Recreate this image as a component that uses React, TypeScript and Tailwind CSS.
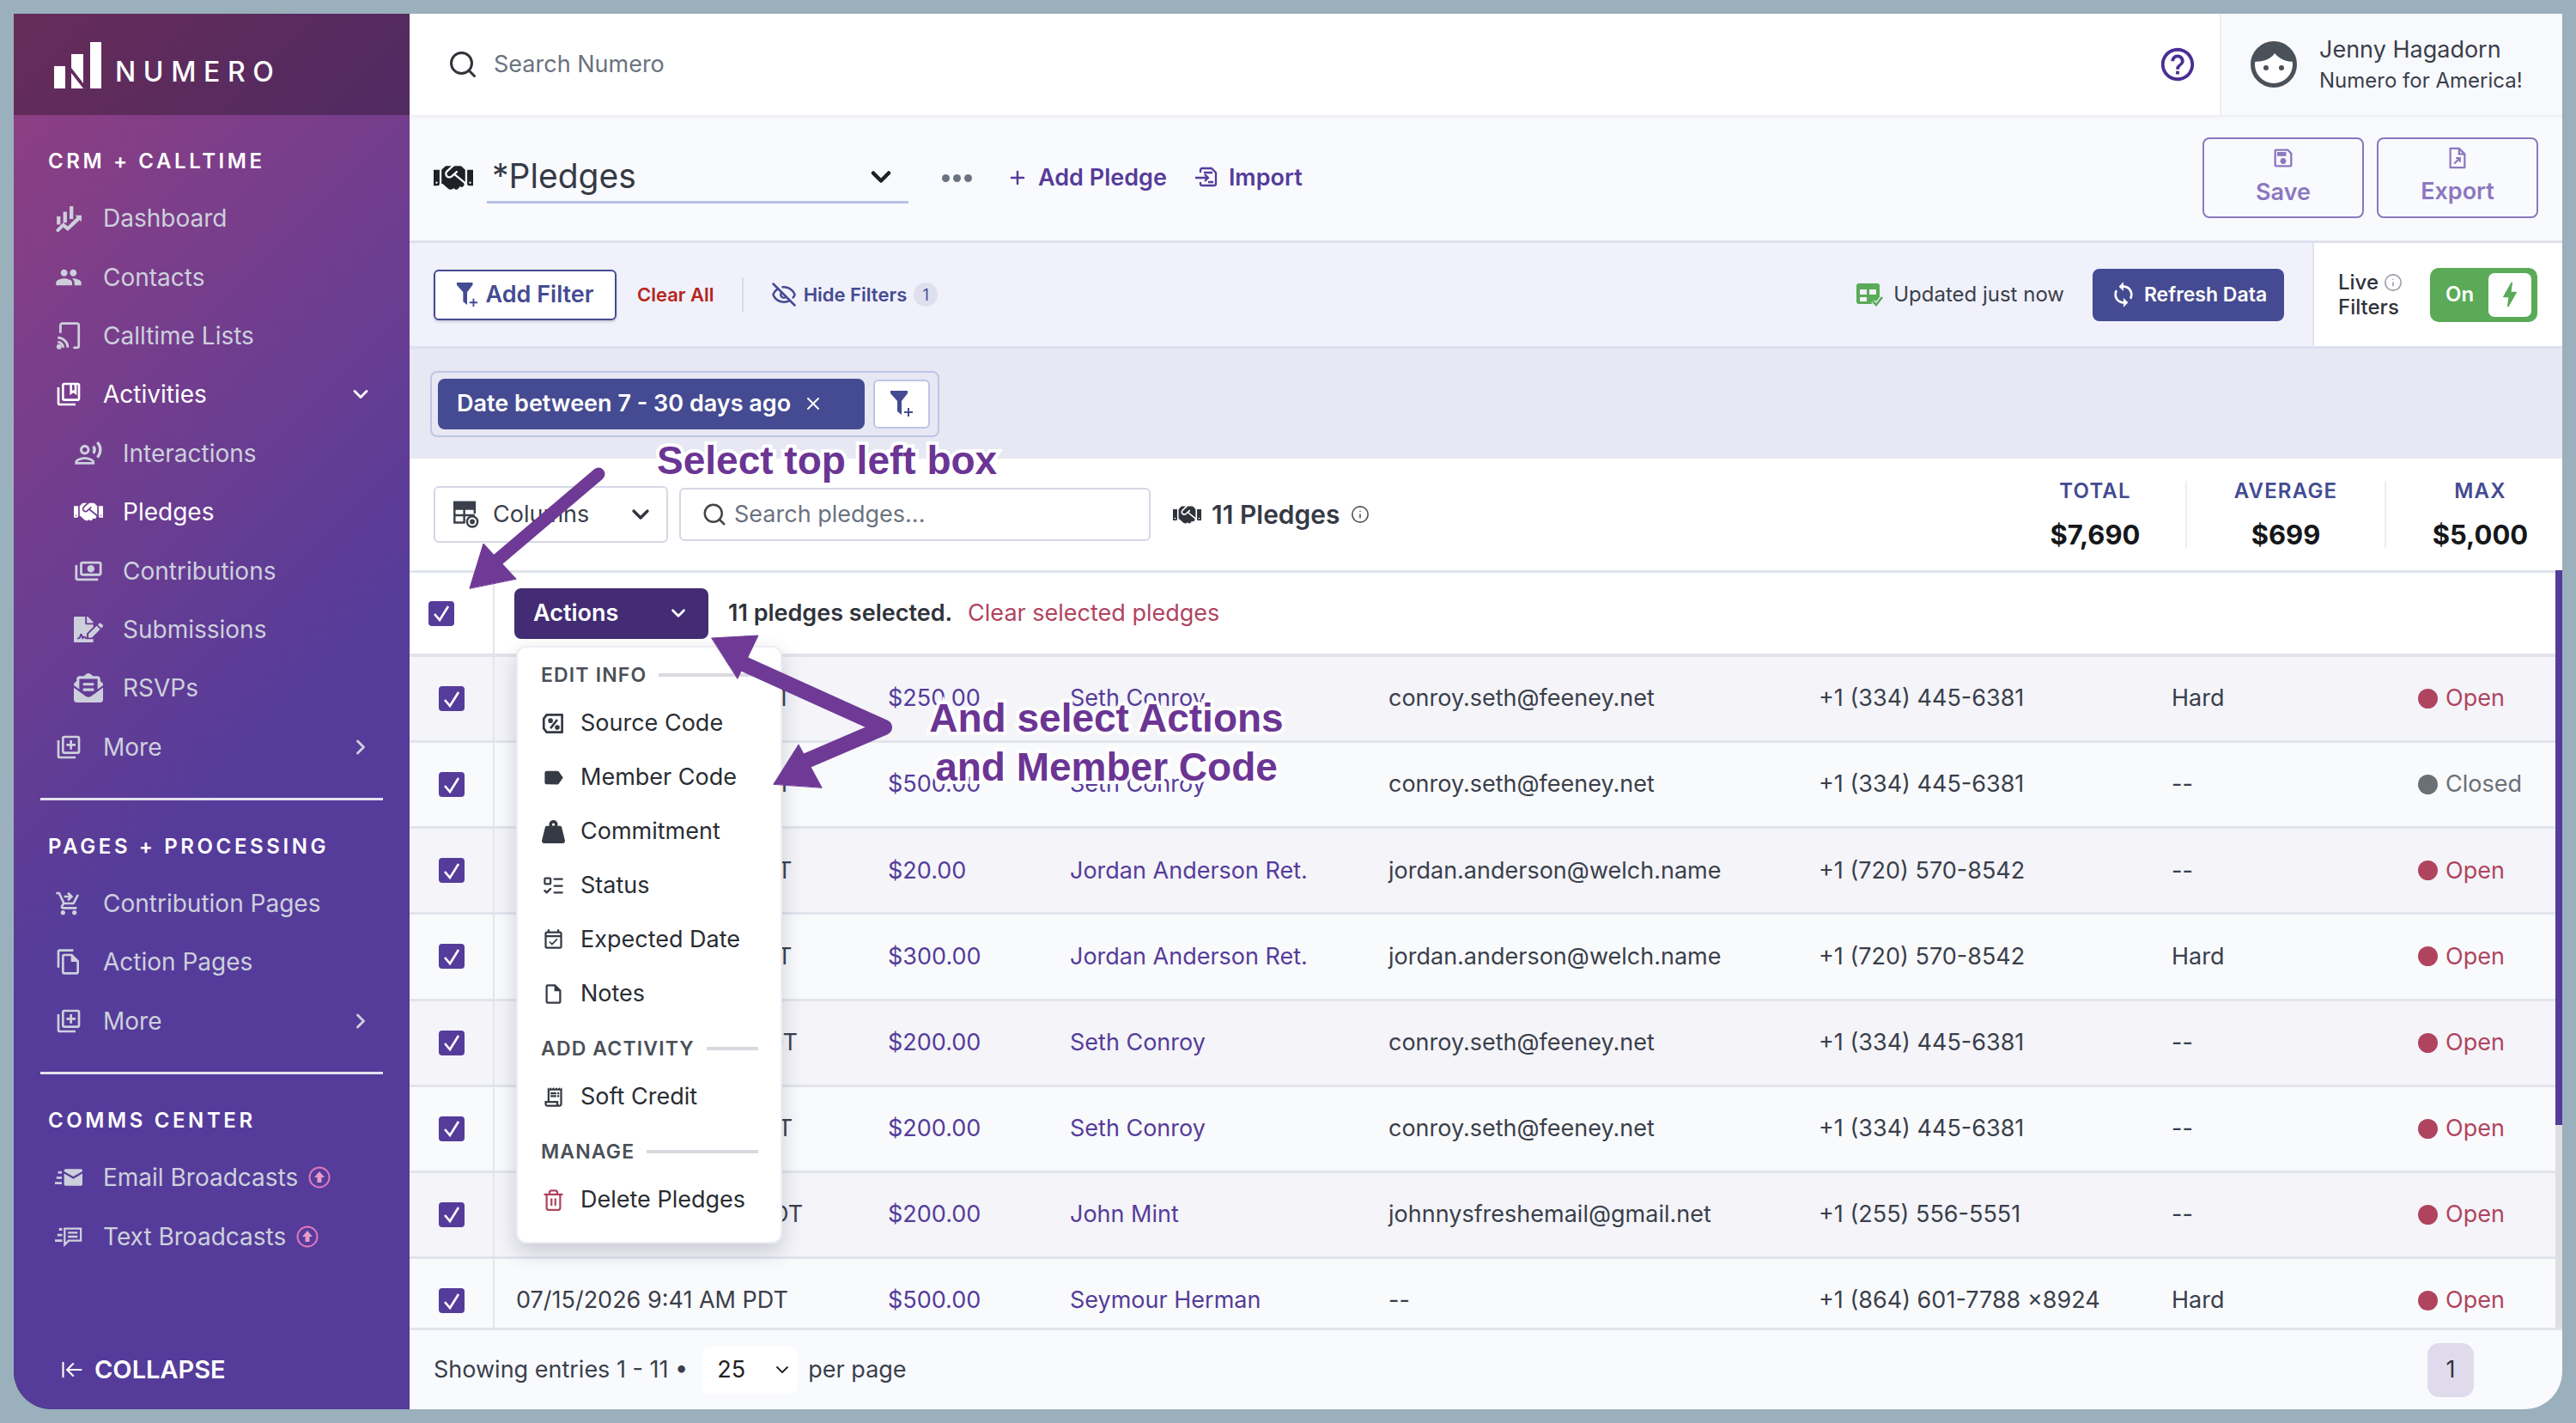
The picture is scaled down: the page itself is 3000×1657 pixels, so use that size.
import React from "react"
import { ArrowLeftToLine, ChevronDown, ChevronRight, EyeOff, Info, ListTodo, Plus, Search, Trash2, X } from "lucide-react"
import { FaEnvelopeOpenText, FaFileSignature, FaHandshake, FaWeightHanging } from "react-icons/fa"
import {
  MdBolt,
  MdHelpOutline,
  MdLabel,
  MdOutlineCollectionsBookmark,
  MdOutlineEventAvailable,
  MdOutlineFileCopy,
  MdOutlineInsertDriveFile,
  MdOutlineLibraryAdd,
  MdOutlinePayments,
  MdOutlineReceiptLong,
  MdOutlineRecordVoiceOver,
  MdOutlineSave,
  MdPeople,
  MdShoppingCartCheckout,
  MdSync,
} from "react-icons/md"

type IconProps = { className?: string }

// Hand drawn icons that the packages don't have
const NumeroMark = () => (
  <svg viewBox="0 0 55 54" className="h-[54px] w-[55px] fill-white">
    <rect x="0" y="28" width="13" height="26" />
    <path d="M20 14h14v34L20 30z" />
    <path d="M20 36l14 18H20z" />
    <rect x="42" y="0" width="13" height="54" />
  </svg>
)

const DashboardIcon = ({ className }: IconProps) => (
  <svg viewBox="0 0 30 30" className={className} fill="currentColor">
    <rect x="2" y="13" width="4" height="9" />
    <rect x="9" y="8" width="4" height="12" />
    <rect x="16" y="2" width="4" height="14" />
    <path d="M1 28l8-8 5 4 10-10-2-2h7v7l-2-2-13 12-5-4-6 6z" />
  </svg>
)

const CastIcon = ({ className }: IconProps) => (
  <svg viewBox="0 0 26 30" className={className} fill="none" stroke="currentColor" strokeWidth="2.6">
    <path d="M4 12V3.5a2 2 0 0 1 2-2h16a2 2 0 0 1 2 2V26a2 2 0 0 1-2 2h-4" />
    <path d="M1 17c6 0 11 5 11 11M1 22c3.500 0 6 2.500 6 6" />
    <circle cx="2.500" cy="27" r="1.500" fill="currentColor" />
  </svg>
)

const EmailBlastIcon = ({ className }: IconProps) => (
  <svg viewBox="0 0 36 22" className={className} fill="currentColor">
    <path d="M12 2a2 2 0 0 1 2-2h20a2 2 0 0 1 2 2v1L24 10 12 3zM12 6l12 7 12-7v14a2 2 0 0 1-2 2H14a2 2 0 0 1-2-2z" />
    <rect x="4" y="3" width="5" height="3" />
    <rect x="2" y="10" width="7" height="3" />
    <rect x="0" y="17" width="9" height="3" />
  </svg>
)

const TextBlastIcon = ({ className }: IconProps) => (
  <svg viewBox="0 0 34 26" className={className} fill="none" stroke="currentColor" strokeWidth="2.400">
    <path d="M12 3h20v15H17l-5 5z" />
    <path d="M16 8h12M16 13h12" />
    <path d="M5 4h4M3 11h6M0 18h9" strokeWidth="3" />
  </svg>
)

const UpgradeBadge = () => (
  <svg viewBox="0 0 26 26" className="h-[26px] w-[26px] shrink-0" fill="none">
    <circle cx="13" cy="13" r="11.500" stroke="#e376bd" strokeWidth="2" />
    <path d="M13 6l6 7h-3.500v6h-5v-6H7z" fill="#e79acb" />
  </svg>
)

const FilterPlus = ({ className }: IconProps) => (
  <svg viewBox="0 0 28 32" className={className} fill="currentColor">
    <path d="M1 1h20v3l-7 9v16l-5-4V13L1 4z" />
    <path d="M21 21h2v4h4v2h-4v4h-2v-4h-4v-2h4z" />
  </svg>
)

const ColumnsIcon = ({ className }: IconProps) => (
  <svg viewBox="0 0 32 34" className={className} fill="none" stroke="currentColor" strokeWidth="2.600">
    <path d="M15 27H2V2h25v14" />
    <path d="M2 2h25v8H2z" fill="currentColor" />
    <path d="M14 10v17M2 18h25" />
    <circle cx="24" cy="26" r="6.500" fill="#fff" />
    <circle cx="24" cy="26" r="1.800" fill="currentColor" />
  </svg>
)

const ImportIcon = ({ className }: IconProps) => (
  <svg viewBox="0 0 28 28" className={className} fill="none" stroke="currentColor" strokeWidth="2.300">
    <path d="M7 8V5a2 2 0 0 1 2-2h11l5 5v13a2 2 0 0 1-2 2H9a2 2 0 0 1-2-2v-2" strokeLinejoin="round" />
    <path d="M1 14h15M12 10l4 4-4 4" />
    <path d="M11 8h10M16 19h6" />
  </svg>
)

const ExportIcon = ({ className }: IconProps) => (
  <svg viewBox="0 0 22 28" className={className} fill="none" stroke="currentColor" strokeWidth="2.400">
    <path d="M2 2h11l7 7v17H2z" strokeLinejoin="round" />
    <path d="M13 2v7h7" />
    <path d="M7 21l7-7M9 14h5v5" />
  </svg>
)

const TableCheckIcon = ({ className }: IconProps) => (
  <svg viewBox="0 0 32 28" className={className} fill="none">
    <rect x="1" y="1" width="27" height="24" rx="3" fill="#5aaa57" />
    <path d="M5 8h8v6H5zM16 8h8v6h-8zM5 17h8v5H5z" fill="#f0f1fa" />
    <path d="M20 22l4 4 7-9" stroke="#f0f1fa" strokeWidth="5" />
    <path d="M20 22l4 4 7-9" stroke="#5aaa57" strokeWidth="2.500" />
  </svg>
)

const PercentBox = ({ className }: IconProps) => (
  <svg viewBox="0 0 24 24" className={className} fill="none" stroke="currentColor" strokeWidth="2.400">
    <path d="M5 3h16v18H5l-3-4V7z" strokeLinejoin="round" />
    <path d="M16 8l-7 9" />
    <circle cx="9" cy="9" r="1.300" fill="currentColor" />
    <circle cx="16" cy="16" r="1.300" fill="currentColor" />
  </svg>
)

const Avatar = () => (
  <svg viewBox="0 0 54 54" className="h-[54px] w-[54px]">
    <circle cx="27" cy="27" r="24.500" fill="#fff" stroke="#4b5158" strokeWidth="5" />
    <path d="M3 24C5 9 15 2 27 2s22 7 24 22c-9 0-17-3-23-10-4 7-14 10-25 10z" fill="#4b5158" />
    <circle cx="18" cy="31" r="3" fill="#4b5158" />
    <circle cx="36" cy="31" r="3" fill="#4b5158" />
  </svg>
)

const navGroups = [
  {
    title: "CRM + CALLTIME",
    items: [
      { label: "Dashboard", icon: DashboardIcon },
      { label: "Contacts", icon: MdPeople },
      { label: "Calltime Lists", icon: CastIcon },
      { label: "Activities", icon: MdOutlineCollectionsBookmark, active: true, chevron: "down" },
      { label: "Interactions", icon: MdOutlineRecordVoiceOver, sub: true },
      { label: "Pledges", icon: FaHandshake, sub: true, active: true },
      { label: "Contributions", icon: MdOutlinePayments, sub: true, flip: true },
      { label: "Submissions", icon: FaFileSignature, sub: true },
      { label: "RSVPs", icon: FaEnvelopeOpenText, sub: true },
      { label: "More", icon: MdOutlineLibraryAdd, chevron: "right" },
    ],
  },
  {
    title: "PAGES + PROCESSING",
    items: [
      { label: "Contribution Pages", icon: MdShoppingCartCheckout },
      { label: "Action Pages", icon: MdOutlineFileCopy },
      { label: "More", icon: MdOutlineLibraryAdd, chevron: "right" },
    ],
  },
  {
    title: "COMMS CENTER",
    items: [
      { label: "Email Broadcasts", icon: EmailBlastIcon, upgrade: true },
      { label: "Text Broadcasts", icon: TextBlastIcon, upgrade: true },
    ],
  },
]

const rows = [
  ["07/22/2026 3:12 PM PDT", "$250.00", "Seth Conroy", "conroy.seth@feeney.net", "+1 (334) 445-6381", "Hard", "Open"],
  ["07/22/2026 3:10 PM PDT", "$500.00", "Seth Conroy", "conroy.seth@feeney.net", "+1 (334) 445-6381", "--", "Closed"],
  ["07/20/2026 1:05 PM PDT", "$20.00", "Jordan Anderson Ret.", "jordan.anderson@welch.name", "+1 (720) 570-8542", "--", "Open"],
  ["07/20/2026 1:02 PM PDT", "$300.00", "Jordan Anderson Ret.", "jordan.anderson@welch.name", "+1 (720) 570-8542", "Hard", "Open"],
  ["07/18/2026 11:20 AM PDT", "$200.00", "Seth Conroy", "conroy.seth@feeney.net", "+1 (334) 445-6381", "--", "Open"],
  ["07/18/2026 11:18 AM PDT", "$200.00", "Seth Conroy", "conroy.seth@feeney.net", "+1 (334) 445-6381", "--", "Open"],
  ["07/16/2026 10:02 AM PDT", "$200.00", "John Mint", "johnnysfreshemail@gmail.net", "+1 (255) 556-5551", "--", "Open"],
  ["07/15/2026 9:41 AM PDT", "$500.00", "Seymour Herman", "--", "+1 (864) 601-7788 x8924", "Hard", "Open"],
]

const menu = [
  {
    title: "EDIT INFO",
    items: [
      { label: "Source Code", icon: PercentBox },
      { label: "Member Code", icon: MdLabel },
      { label: "Commitment", icon: FaWeightHanging },
      { label: "Status", icon: ListTodo },
      { label: "Expected Date", icon: MdOutlineEventAvailable },
      { label: "Notes", icon: MdOutlineInsertDriveFile },
    ],
  },
  { title: "ADD ACTIVITY", items: [{ label: "Soft Credit", icon: MdOutlineReceiptLong }] },
  { title: "MANAGE", items: [{ label: "Delete Pledges", icon: Trash2, danger: true }] },
]

const stats = [
  { label: "TOTAL", value: "$7,690", width: "w-[210px]" },
  { label: "AVERAGE", value: "$699", width: "w-[232px]" },
  { label: "MAX", value: "$5,000", width: "w-[207px] pl-[14px]" },
]

const Checkbox = () => (
  <span className="flex h-[29px] w-[30px] items-center justify-center rounded-[4px] bg-[#553c9a]">
    <svg viewBox="0 0 24 24" className="h-[24px] w-[24px]" fill="none" stroke="#fff" strokeWidth="2.600">
      <path d="M4 13l6 7L20 4" />
    </svg>
  </span>
)

const Sidebar = () => (
  <aside className="flex w-[461px] shrink-0 flex-col rounded-bl-[44px] bg-[linear-gradient(135deg,#933f80_0%,#553c9a_55%)]">
    <div className="flex h-[118px] shrink-0 items-center gap-[16px] bg-black/30 pl-[47px] pt-[2px]">
      <NumeroMark />
      <span className="mt-[16px] text-[32px] font-medium leading-none tracking-[0.27em] text-white">NUMERO</span>
    </div>
    {navGroups.map((group, i) => (
      <div key={group.title} className={i > 0 ? "mx-0 mt-[25px] border-t-0" : ""}>
        {i > 0 && <div className="mx-[31px] h-[3px] bg-[#e3e1ef]" />}
        <div className="mb-[14px] mt-[36px] flex h-[36px] items-center pl-[40px] text-[24px] font-semibold tracking-[0.15em] text-white">
          {group.title}
        </div>
        {group.items.map((item) => {
          const Icon = item.icon
          return (
            <div
              key={item.label}
              className={`flex h-[68.4px] items-center pr-[43px] text-[28px] ${item.sub ? "pl-[70px]" : "pl-[48px]"} ${item.active ? "text-white" : "text-[#cdd0dc]"}`}
            >
              <span className={`flex shrink-0 items-center ${item.sub ? "w-[57px]" : "w-[56px]"}`}>
                <Icon className={`${item.sub ? "h-[34px] w-[34px]" : "h-[32px] w-[32px]"} ${item.flip ? "-scale-x-100" : ""}`} />
              </span>
              <span className="whitespace-nowrap">{item.label}</span>
              {item.upgrade && <span className="ml-[12px]"><UpgradeBadge /></span>}
              {item.chevron === "down" && <ChevronDown className="ml-auto h-[28px] w-[28px]" strokeWidth={2.500} />}
              {item.chevron === "right" && <ChevronRight className="ml-auto h-[28px] w-[28px]" strokeWidth={2.500} />}
            </div>
          )
        })}
      </div>
    ))}
    <div className="mt-auto flex h-[92px] shrink-0 items-center gap-[12px] pl-[54px] text-[29px] font-semibold text-white">
      <ArrowLeftToLine className="h-[28px] w-[28px]" strokeWidth={1.800} />
      COLLAPSE
    </div>
  </aside>
)

const Header = () => (
  <header className="relative z-10 flex h-[118px] shrink-0 items-center bg-white shadow-[0_2px_4px_rgba(60,60,90,0.08)]">
    <Search className="ml-[44px] h-[36px] w-[36px] text-[#30343b]" strokeWidth={2} />
    <span className="ml-[18px] text-[27px] text-[#6b7280]">Search Numero</span>
    <MdHelpOutline className="ml-auto h-[46px] w-[46px] text-[#4a2f94]" />
    <div className="ml-[26px] flex h-full w-[399px] items-center border-l-2 border-[#eceef3] bg-[#f8f9fc] pl-[34px]">
      <Avatar />
      <div className="ml-[26px] leading-none">
        <div className="text-[27px] text-[#3a3f4b]">Jenny Hagadorn</div>
        <div className="mt-[11px] text-[24px] text-[#3a3f4b]">Numero for America!</div>
      </div>
    </div>
  </header>
)

const Toolbar = () => (
  <div className="flex h-[149px] shrink-0 items-center border-b-[3px] border-[#dfe0ee] bg-[#f9fafe] pl-[28px]">
    <FaHandshake className="h-[46px] w-[46px] text-[#1f2126]" />
    <div className="ml-[16px] flex h-[60px] w-[491px] items-center justify-between border-b-[3px] border-[#b8c0e6] pl-[6px] pr-[14px] text-[39px] text-[#363a45]">
      *Pledges
      <ChevronDown className="h-[36px] w-[36px] text-[#1f2126]" strokeWidth={3} />
    </div>
    <div className="ml-[39px] flex gap-[4px]">
      <span className="h-[9px] w-[9px] rounded-full bg-[#6b7280]" />
      <span className="h-[9px] w-[9px] rounded-full bg-[#6b7280]" />
      <span className="h-[9px] w-[9px] rounded-full bg-[#6b7280]" />
    </div>
    <div className="ml-[41px] flex items-center text-[27px] font-semibold text-[#553c9a]">
      <Plus className="h-[24px] w-[24px]" strokeWidth={2.500} />
      <span className="ml-[12px]">Add Pledge</span>
      <ImportIcon className="ml-[32px] h-[28px] w-[28px]" />
      <span className="ml-[12px]">Import</span>
    </div>
    <div className="ml-auto mr-[28px] flex gap-[15px] text-[27px] font-semibold text-[#8b78bf]">
      <div className="flex h-[94px] w-[188px] flex-col items-center justify-center gap-[6px] rounded-[8px] border-2 border-[#8a78bd]">
        <MdOutlineSave className="h-[28px] w-[28px]" />
        Save
      </div>
      <div className="flex h-[94px] w-[188px] flex-col items-center justify-center gap-[6px] rounded-[8px] border-2 border-[#8a78bd]">
        <ExportIcon className="h-[26px] w-[22px]" />
        Export
      </div>
    </div>
  </div>
)

const FilterBar = () => (
  <div className="flex h-[123px] shrink-0 items-stretch border-b-[3px] border-[#dfe0ee] bg-[#f0f1fa]">
    <div className="flex flex-1 items-center pl-[28px]">
      <div className="flex h-[59px] w-[213px] items-center justify-center gap-[8px] rounded-[6px] border-2 border-[#444b92] bg-white text-[27px] font-semibold text-[#444b92] shadow-[0_2px_3px_rgba(60,60,90,0.2)]">
        <FilterPlus className="h-[32px] w-[26px]" />
        Add Filter
      </div>
      <span className="ml-[24px] text-[22px] font-semibold text-[#b3261e]">Clear All</span>
      <span className="ml-[32px] h-[40px] w-[2px] bg-[#d9dae6]" />
      <EyeOff className="ml-[32px] h-[30px] w-[30px] text-[#444b92]" strokeWidth={2} />
      <span className="ml-[8px] text-[22px] font-semibold text-[#444b92]">Hide Filters</span>
      <span className="ml-[8px] flex h-[28px] w-[28px] items-center justify-center rounded-full bg-[#dfe0ef] text-[18px] text-[#444b92]">1</span>
      <TableCheckIcon className="ml-auto h-[28px] w-[32px]" />
      <span className="ml-[12px] text-[24px] text-[#3a3f4b]">Updated just now</span>
      <div className="ml-[33px] mr-[33px] flex h-[61px] w-[223px] items-center justify-center gap-[8px] rounded-[8px] bg-[#454b92] text-[23px] font-semibold text-white">
        <MdSync className="h-[32px] w-[32px]" />
        Refresh Data
      </div>
    </div>
    <div className="flex w-[291px] items-center border-l-2 border-[#e2e3ef] bg-white pl-[28px]">
      <div className="text-[24px] font-medium leading-[29px] text-[#2f333b]">
        <div className="flex items-center gap-[6px]">Live <Info className="h-[22px] w-[22px] text-[#9a9da6]" strokeWidth={1.800} /></div>
        <div>Filters</div>
      </div>
      <div className="ml-[32px] flex h-[63px] w-[125px] items-center rounded-[10px] bg-[#5aaa57] pl-[18px] text-[24px] font-semibold text-white">
        On
        <span className="ml-auto mr-[7px] flex h-[51px] w-[50px] items-center justify-center rounded-[7px] bg-white">
          <MdBolt className="h-[38px] w-[38px] text-[#5aaa57]" />
        </span>
      </div>
    </div>
  </div>
)

const ChipBand = () => (
  <div className="flex h-[128px] shrink-0 items-center bg-[#e7e8f3] pl-[24px]">
    <div className="flex h-[77px] w-[593px] items-center gap-[10px] rounded-[8px] border-2 border-[#c0c5e8] pl-[7px]">
      <div className="flex h-[59px] w-[497px] items-center rounded-[8px] bg-[#454b92] pl-[22px] text-[27px] font-semibold text-white">
        Date between 7 - 30 days ago
        <X className="ml-[14px] h-[24px] w-[24px]" strokeWidth={2} />
      </div>
      <div className="flex h-[57px] w-[66px] items-center justify-center rounded-[6px] border-2 border-[#c0c5e8] bg-white text-[#444b92]">
        <FilterPlus className="h-[34px] w-[28px]" />
      </div>
    </div>
  </div>
)

const StatsBar = () => (
  <div className="flex h-[130px] shrink-0 items-center bg-white pl-[28px]">
    <div className="flex h-[66px] w-[273px] items-center rounded-[6px] border-2 border-[#d5d8e5] pl-[20px] pr-[14px] text-[27px] text-[#3a3f4b]">
      <ColumnsIcon className="h-[32px] w-[31px]" />
      <span className="ml-[16px]">Columns</span>
      <ChevronDown className="ml-auto h-[32px] w-[32px] text-[#2f333b]" strokeWidth={2.500} />
    </div>
    <div className="ml-[13px] flex h-[62px] w-[549px] items-center rounded-[6px] border-2 border-[#d5d8e5] pl-[24px] text-[27px] text-[#6b7280]">
      <Search className="h-[30px] w-[30px] text-[#444]" strokeWidth={2} />
      <span className="ml-[8px]">Search pledges...</span>
    </div>
    <FaHandshake className="ml-[26px] h-[33px] w-[33px] text-[#2f333b]" />
    <span className="ml-[12px] text-[30px] font-semibold text-[#363a45]">11 Pledges</span>
    <Info className="ml-[12px] h-[22px] w-[22px] text-[#555]" strokeWidth={1.800} />
    <div className="ml-auto flex">
      {stats.map((s, i) => (
        <div key={s.label} className={`flex h-[78px] flex-col items-center justify-between ${s.width} ${i > 0 ? "border-l-2 border-[#eceef3]" : ""}`}>
          <span className="text-[24px] font-semibold leading-none tracking-[0.05em] text-[#444b92]">{s.label}</span>
          <span className="text-[31px] font-bold leading-none text-[#15171a]">{s.value}</span>
        </div>
      ))}
    </div>
  </div>
)

const ActionsMenu = () => (
  <div className="absolute left-[124px] top-[88px] z-10 h-[696px] w-[310px] rounded-[12px] border-2 border-[#eceef3] bg-white shadow-[0_10px_24px_rgba(60,60,90,0.22)]">
    {menu.map((group) => (
      <div key={group.title} className="pt-[12px]">
        <div className="mb-[5px] flex h-[40px] items-center gap-[14px] pl-[27px] pr-[26px] text-[23px] font-semibold tracking-[0.05em] text-[#4b5058]">
          <span className="whitespace-nowrap">{group.title}</span>
          <span className="h-[4px] flex-1 bg-[#d9dae0]" />
        </div>
        {group.items.map((item) => {
          const Icon = item.icon
          return (
            <div key={item.label} className="flex h-[63px] items-center pl-[28px] text-[27px] text-[#2a2d33]">
              <Icon className={`h-[27px] w-[27px] shrink-0 ${"danger" in item ? "text-[#b0445f]" : "text-[#363a45]"}`} />
              <span className="ml-[18px] whitespace-nowrap">{item.label}</span>
            </div>
          )
        })}
      </div>
    ))}
  </div>
)

const PledgeTable = () => (
  <div className="relative flex min-h-0 flex-1 overflow-hidden">
    <div className="min-w-0 flex-1">
      <div className="flex h-[101px] items-stretch border-y-[3px] border-b-[4px] border-[#e0e3ea] bg-white">
        <div className="flex w-[99px] shrink-0 items-center justify-center border-r-2 border-[#e4e5ec] pr-[29px] pl-[6px]">
          <Checkbox />
        </div>
        <div className="flex items-center pl-[23px] text-[27px]">
          <div className="flex h-[59px] w-[226px] items-center justify-between rounded-[8px] bg-[#432c74] px-[22px] font-semibold text-white">
            Actions
            <ChevronDown className="h-[26px] w-[26px]" strokeWidth={2.500} />
          </div>
          <span className="ml-[23px] font-semibold text-[#2f333b]">11 pledges selected.</span>
          <span className="ml-[18px] text-[#b0445f]">Clear selected pledges</span>
        </div>
      </div>
      {rows.map((r, i) => (
        <div
          key={i}
          className={`grid h-[100.15px] grid-cols-[99px_458px_212px_371px_501px_411px_287px_1fr] items-center border-b-[3px] border-[#e2e4ec] text-[27px] text-[#3a3f4b] ${i % 2 === 0 ? "bg-[#f4f4f9]" : "bg-[#f9fafc]"}`}
        >
          <div className="flex h-full items-center border-r-2 border-[#e4e5ec] pl-[34px]">
            <Checkbox />
          </div>
          <div className="whitespace-nowrap pl-[25px]">{r[0]}</div>
          <div className="text-[#553c9a]">{r[1]}</div>
          <div className="whitespace-nowrap text-[#553c9a]">{r[2]}</div>
          <div className="whitespace-nowrap">{r[3]}</div>
          <div className="whitespace-nowrap">{r[4]}</div>
          <div>{r[5]}</div>
          <div className={`flex items-center gap-[9px] ${r[6] === "Open" ? "text-[#b0445f]" : "text-[#6b7077]"}`}>
            <span className={`h-[23px] w-[23px] rounded-full ${r[6] === "Open" ? "bg-[#b0445f]" : "bg-[#6b7077]"}`} />
            {r[6]}
          </div>
        </div>
      ))}
    </div>
    <div className="w-[8px] shrink-0 bg-[#dedee3]">
      <div className="h-[646px] bg-[#553c9a]" />
    </div>
    <ActionsMenu />
  </div>
)

const Footer = () => (
  <footer className="flex h-[95px] shrink-0 items-center rounded-br-[44px] border-t-[3px] border-[#e2e4ec] bg-[#f9fafe] pl-[28px] text-[27px] text-[#3a3f4b]">
    Showing entries 1 - 11 •
    <div className="ml-[17px] flex h-[55px] w-[111px] items-center justify-between rounded-[8px] bg-white pl-[17px] pr-[6px] text-[#1f2126]">
      25
      <ChevronDown className="h-[24px] w-[24px]" strokeWidth={1.800} />
    </div>
    <span className="ml-[12px]">per page</span>
    <span className="ml-auto mr-[103px] flex h-[63px] w-[54px] items-center justify-center rounded-[14px] bg-[#dfdbec] text-[#2f333b]">1</span>
  </footer>
)

// Purple call-outs laid over the page by whoever took the screenshot
const Annotations = () => (
  <>
    <svg viewBox="0 0 3000 1657" className="pointer-events-none absolute inset-0 z-20 h-[1657px] w-[3000px]">
      <g fill="#6f3a96" stroke="#6f3a96" strokeLinecap="round" strokeLinejoin="round">
        <path d="M697 552L570 660" fill="none" strokeWidth="15" />
        <path d="M547 685L563 633L601 674z" strokeWidth="1" />
        <path d="M1030 847L850 765" fill="none" strokeWidth="0" />
        <path d="M855 768L1030 847L925 892" fill="none" strokeWidth="18" />
        <path d="M829 743L883 740L859 790z" strokeWidth="1" />
        <path d="M901 913L930 867L957 917z" strokeWidth="1" />
      </g>
    </svg>
    <div className="absolute left-[765px] top-[506px] z-30 whitespace-nowrap text-[46px] font-bold leading-[60px] text-[#6b3594] [font-family:'Liberation_Sans',sans-serif] [paint-order:stroke_fill] [-webkit-text-stroke:8px_#fff]">
      Select top left box
    </div>
    <div className="absolute left-[1070px] top-[808px] z-30 w-[437px] text-center text-[46px] font-bold leading-[57px] text-[#6b3594] [font-family:'Liberation_Sans',sans-serif] [paint-order:stroke_fill] [-webkit-text-stroke:8px_#fff]">
      And select Actions
      <br />
      and Member Code
    </div>
  </>
)

const App: React.FC = () => (
  <div className="relative h-screen w-screen overflow-hidden bg-[#9ab0bc] p-[16px] [font-family:Inter,sans-serif]">
    <div className="flex h-full rounded-b-[44px] bg-[#2b2a1f]">
      <Sidebar />
      <main className="flex min-w-0 flex-1 flex-col rounded-br-[44px] bg-[#f9fafe]">
        <Header />
        <Toolbar />
        <FilterBar />
        <ChipBand />
        <StatsBar />
        <PledgeTable />
        <Footer />
      </main>
    </div>
    <Annotations />
  </div>
)

export default App
